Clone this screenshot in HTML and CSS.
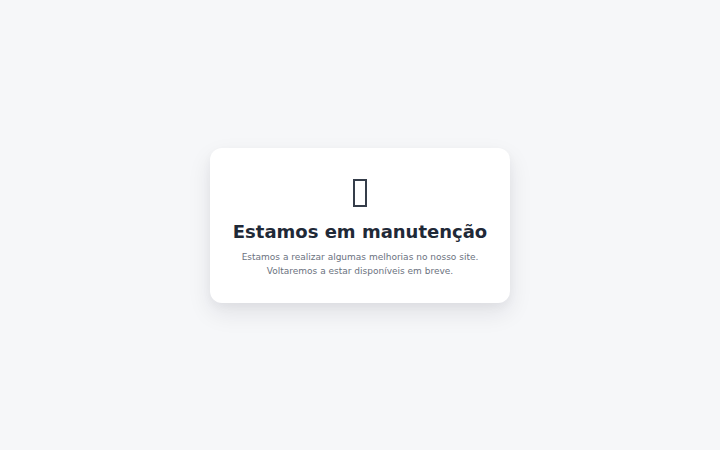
FILE: index.html
```html
<!DOCTYPE html>
<html lang="pt">
<head>
<meta charset="utf-8">
<title>Manutenção</title>
<link rel="stylesheet" href="styles.css">
</head>
<body>
<main class="page">
  <section class="card">
    <div class="icon" aria-hidden="true"><span class="tofu"></span></div>
    <h1 class="title">Estamos em manutenção</h1>
    <p class="text">Estamos a realizar algumas melhorias no nosso site.<br>Voltaremos a estar disponíveis em breve.</p>
  </section>
</main>
</body>
</html>
```
FILE: styles.css
```css
html, body {
  margin: 0;
  padding: 0;
  height: 100%;
}
body {
  background: #f6f7f9;
  font-family: "DejaVu Sans", sans-serif;
}
.page {
  height: 100%;
  display: flex;
  align-items: center;
  justify-content: center;
}
.card {
  width: 300px;
  box-sizing: border-box;
  background: #ffffff;
  border-radius: 12px;
  box-shadow: 0 10px 25px rgba(17, 24, 39, 0.09), 0 4px 10px rgba(17, 24, 39, 0.04);
  padding: 24px 16px 25px;
  text-align: center;
}
.icon {
  height: 36px;
  box-sizing: border-box;
  padding-bottom: 1px;
  display: flex;
  justify-content: center;
  align-items: flex-end;
}
.tofu {
  width: 14px;
  height: 28px;
  box-sizing: border-box;
  border: 2px solid #353d4a;
}
.title {
  margin: 12px 0 0;
  font-size: 18px;
  font-weight: 700;
  color: #1f2937;
  line-height: 24px;
}
.text {
  margin: 6px 0 0;
  font-size: 9px;
  line-height: 14px;
  color: #6b7280;
}
```
